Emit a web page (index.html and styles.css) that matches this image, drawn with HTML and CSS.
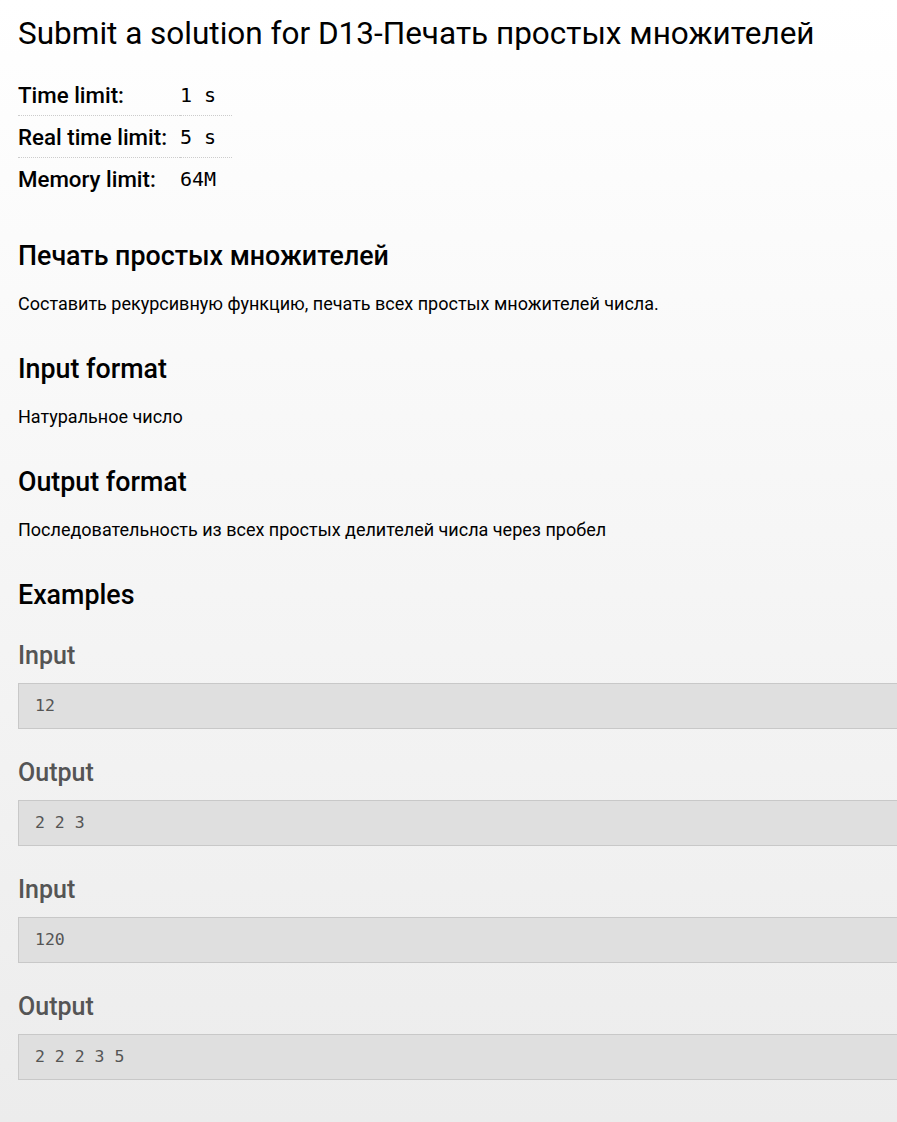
FILE: index.html
```html
<!DOCTYPE html>
<html lang="ru">
<head>
<meta charset="utf-8">
<title>Submit a solution</title>
<link rel="stylesheet" href="styles.css">
</head>
<body>
<main class="page">
  <h1 class="title">Submit a solution for D13-Печать простых множителей</h1>
  <table class="limits">
    <tr><th>Time limit:</th><td>1 s</td></tr>
    <tr><th>Real time limit:</th><td>5 s</td></tr>
    <tr><th>Memory limit:</th><td>64M</td></tr>
  </table>
  <section class="sec">
    <h2 class="h2">Печать простых множителей</h2>
    <p class="text">Составить рекурсивную функцию, печать всех простых множителей числа.</p>
  </section>
  <section class="sec">
    <h2 class="h2">Input format</h2>
    <p class="text">Натуральное число</p>
  </section>
  <section class="sec">
    <h2 class="h2">Output format</h2>
    <p class="text">Последовательность из всех простых делителей числа через пробел</p>
  </section>
  <section class="sec">
    <h2 class="h2 h2-examples">Examples</h2>
    <div class="example">
      <h3 class="h3">Input</h3>
      <pre class="code">12</pre>
      <h3 class="h3">Output</h3>
      <pre class="code">2 2 3</pre>
    </div>
    <div class="example">
      <h3 class="h3">Input</h3>
      <pre class="code">120</pre>
      <h3 class="h3">Output</h3>
      <pre class="code">2 2 2 3 5</pre>
    </div>
  </section>
</main>
</body>
</html>
```
FILE: styles.css
```css
html {
  overflow-x: hidden;
  background: #eeeeee;
}
body {
  margin: 0;
  min-height: 1122px;
  background: linear-gradient(to bottom, #ffffff 0px, #ececec 1122px);
  font-family: Roboto, "Liberation Sans", sans-serif;
  color: #000;
}
.page {
  padding: 15px 0 40px 18px;
}
.title {
  margin: 0 0 21px;
  font-size: 31.5px;
  font-weight: 400;
  line-height: 38px;
}
.limits {
  border-collapse: collapse;
  margin-bottom: 41px;
}
.limits th {
  text-align: left;
  font-weight: 500;
  font-size: 22.3px;
  padding: 0 13px 0 0;
  height: 41px;
  white-space: nowrap;
}
.limits td {
  font-family: "DejaVu Sans Mono", monospace;
  font-size: 20px;
  padding: 0 16px 0 0;
  height: 41px;
}
.limits tr + tr th,
.limits tr + tr td {
  border-top: 1px dotted #ccc;
}
.sec {
  margin-bottom: 36px;
}
.h2 {
  margin: 0 0 19px;
  font-size: 26.8px;
  font-weight: 500;
  line-height: 32px;
}
.h2-examples {
  margin-bottom: 30px;
}
.text {
  margin: 0;
  font-size: 18px;
  line-height: 26px;
}
.h3 {
  margin: 0 0 12px;
  font-size: 25px;
  font-weight: 500;
  color: #555;
  line-height: 30px;
}
.code {
  margin: 0 -20px 29px 0;
  padding: 12px 16px;
  background: #dfdfdf;
  border: 1px solid #c8c8c8;
  font-family: "DejaVu Sans Mono", monospace;
  font-size: 16.5px;
  line-height: 20px;
  color: #555;
}
```
